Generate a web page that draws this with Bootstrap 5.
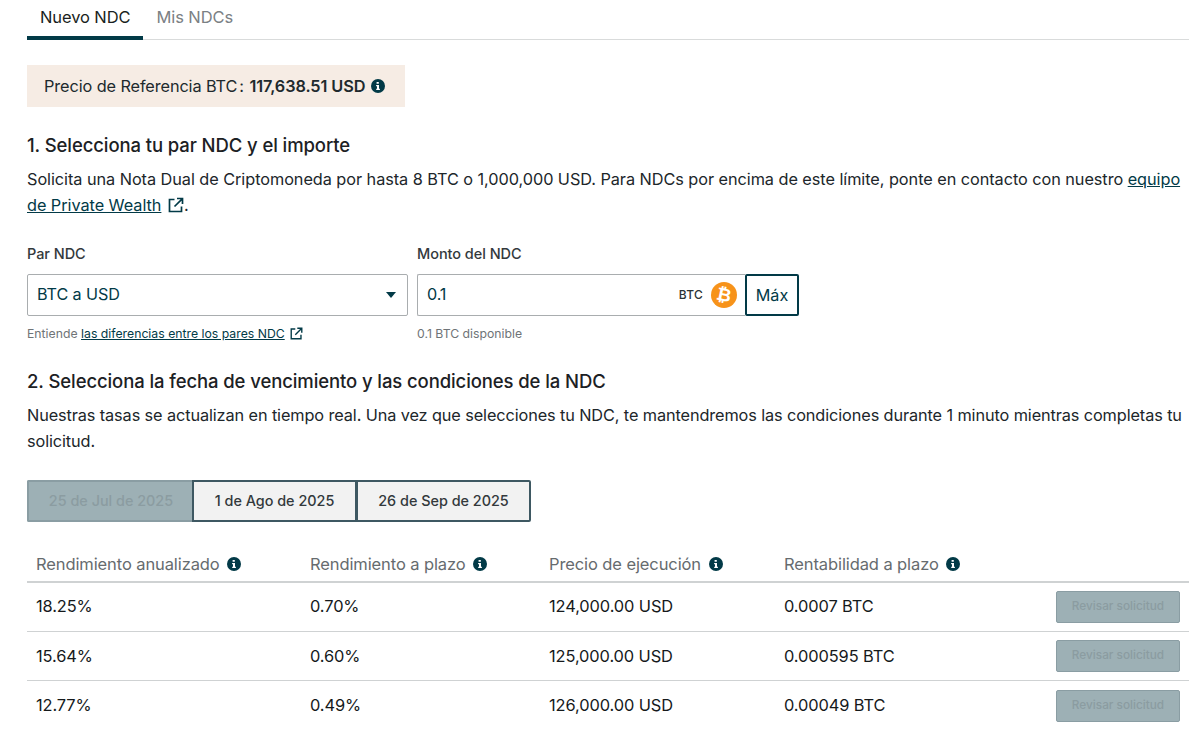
<!doctype html>
<html lang="es">
<head>
<meta charset="utf-8">
<title>Nueva NDC</title>
<link href="https://cdn.jsdelivr.net/npm/bootstrap@5.3.0/dist/css/bootstrap.min.css" rel="stylesheet">
<style>
html,body{background:#fff;overflow:hidden}
body{font-family:Inter,"Liberation Sans",sans-serif;color:#1a1f22;font-size:16.3px;letter-spacing:-.1px}
.pageshell{padding:0 11px 0 27px;height:738px}
.tabbar{height:40px;border-bottom:1px solid #d9dbdb;margin-bottom:25px}
.tabitem{display:block;height:40px;padding:6px 13px 0;font-size:16.5px;line-height:22px;color:#7b8084;text-decoration:none}
.tabitem.on{color:#1a1f22;border-bottom:4px solid #023a47;border-radius:4px 4px 0 0;margin-right:13px}
.refbox{background:#f6ece4;height:42px;width:378px;padding:0 17px;font-size:16.3px;color:#20292d;margin-bottom:25px}
.refbox .colon{margin-left:2px}
.refbox b{font-weight:600;margin-left:1px;letter-spacing:-.1px}
.infoico{width:14px;height:14px;flex:none}
.refbox .infoico{margin-left:6px}
.secttl{font-size:18.5px;font-weight:500;line-height:26px;margin:0 0 8px;color:#1c2124;letter-spacing:-.1px}
.bodytxt{font-size:16.28px;line-height:26px;margin:0;color:#20262a}
.bodytxt.firstpara{letter-spacing:-.05px}
.bodytxt a,.helptxt a{color:#023a47}
.extico{width:16px;height:16px;vertical-align:-2px;margin-left:2px}
.helptxt .extico{width:13px;height:13px;margin-left:2px}
.formzone{margin-top:26px;gap:9px;margin-bottom:26px}
.parcol{width:381px}
.lbl{font-size:14.5px;font-weight:500;line-height:20px;margin-bottom:10px;color:#33393c;letter-spacing:-.05px}
.fieldbox{height:42px;border:1px solid #a9adaf;border-radius:2px;padding:0 9px 1px;font-size:16.2px;color:#023a47;background:#fff}
.parcol .fieldbox{padding-right:11px}
.amtbox{width:328px;border-right:0;border-radius:2px 0 0 2px;padding-right:8px}
.unit{font-size:12px;font-weight:500;color:#2c3336;margin-right:8px;letter-spacing:.3px}
.maxbtn{width:54px;height:42px;border:2px solid #023a47;border-radius:2px;color:#023a47;background:#fff;font-size:16.2px;padding:0;font-weight:400}
.maxbtn:hover{color:#023a47;background:#fff;border-color:#023a47}
.helptxt{font-size:12.25px;line-height:16px;margin-top:10px;color:#6f7477;letter-spacing:0}
.dategrp{margin-top:26px;margin-bottom:30px}
.dategrp .btn{height:42px;padding:0;border:2px solid #3e5862;border-radius:0;background:#f2f2f2;color:#33393c;font-size:14.4px;font-weight:500;opacity:1}
.dategrp .btn + .btn{margin-left:-1px}
.dategrp .d1{width:166px;background:#9db0b5;color:#8b9ca1;border-color:#8a9da3;border-right:0;border-radius:2px 0 0 2px}
.dategrp .d2{width:165px}
.dategrp .d3{width:175px;border-radius:0 2px 2px 0}
.ratetbl{margin:0;table-layout:fixed;width:1162px;--bs-table-border-color:#cfd2d3}
.ratetbl th{font-weight:400;font-size:16.5px;color:#666b6e;padding:0 9px 4px;height:26px;vertical-align:middle;border-bottom-width:2px}
.ratetbl td{font-size:16.4px;color:#15191b;padding:0 9px;height:49.5px;vertical-align:middle;font-weight:400}
.ratetbl tr:last-child td{border-bottom:0}
.ratetbl th .infoico{margin-left:3px;vertical-align:-1px}
.c1{width:274px}.c2{width:239px}.c3{width:235px}.c4{width:240px}
.revbtn{width:124px;height:32px;padding:0;background:#9db0b5;border:1px solid #8a9da3;border-radius:2px;color:#8b9ca1;font-size:11.8px;font-weight:500;opacity:1}
.btn:disabled{background:#9db0b5;color:#8b9ca1;border-color:#8a9da3;opacity:1}
</style>
</head>
<body>
<svg width="0" height="0" class="position-absolute">
  <defs>
    <symbol id="info" viewBox="0 0 14 14"><circle cx="7" cy="7" r="7" fill="#023a47"/><path d="M5.6 3h2.2v1.8H5.6zM5.1 6h2.9v3.8h.9V11H5.2V9.8H6V7.2h-.9z" fill="#fff"/></symbol>
    <symbol id="ext" viewBox="0 0 16 16"><path d="M6.5 2.5H1.5v12h12V9.5M9 1.5h5.5V7M14.2 1.8 6.5 9.5" fill="none" stroke="#023a47" stroke-width="1.7"/></symbol>
  </defs>
</svg>
<main class="pageshell">
  <nav class="tabbar d-flex">
    <a class="tabitem on" href="#">Nuevo NDC</a>
    <a class="tabitem px-0" href="#">Mis NDCs</a>
  </nav>

  <div class="refbox d-flex align-items-center">
    <span>Precio de Referencia BTC<span class="colon">:</span> <b>117,638.51 USD</b></span>
    <svg class="infoico"><use href="#info"/></svg>
  </div>

  <h2 class="secttl">1. Selecciona tu par NDC y el importe</h2>
  <p class="bodytxt firstpara">Solicita una Nota Dual de Criptomoneda por hasta 8 BTC o 1,000,000 USD. Para NDCs por encima de este límite, ponte en contacto con nuestro <a href="#">equipo de Private Wealth</a> <svg class="extico"><use href="#ext"/></svg>.</p>

  <div class="formzone d-flex">
    <div class="parcol">
      <div class="lbl">Par NDC</div>
      <div class="fieldbox d-flex align-items-center justify-content-between">
        <span>BTC a USD</span>
        <svg width="10" height="6" viewBox="0 0 10 6"><path d="M0 0h10L5 6z" fill="#023a47"/></svg>
      </div>
      <div class="helptxt">Entiende <a href="#">las diferencias entre los pares NDC</a> <svg class="extico"><use href="#ext"/></svg></div>
    </div>
    <div>
      <div class="lbl">Monto del NDC</div>
      <div class="d-flex">
        <div class="fieldbox amtbox d-flex align-items-center">
          <span class="flex-grow-1">0.1</span>
          <span class="unit">BTC</span>
          <svg width="26" height="26" viewBox="0 0 26 26"><circle cx="13" cy="13" r="13" fill="#f7931a"/><text x="13" y="19" font-family="Liberation Sans,sans-serif" font-size="18" font-weight="700" fill="#fff" text-anchor="middle" transform="rotate(12 13 13)">₿</text></svg>
        </div>
        <button class="btn maxbtn" type="button">Máx</button>
      </div>
      <div class="helptxt">0.1 BTC disponible</div>
    </div>
  </div>

  <h2 class="secttl">2. Selecciona la fecha de vencimiento y las condiciones de la NDC</h2>
  <p class="bodytxt">Nuestras tasas se actualizan en tiempo real. Una vez que selecciones tu NDC, te mantendremos las condiciones durante 1 minuto mientras completas tu solicitud.</p>

  <div class="dategrp d-flex">
    <button class="btn d1" type="button" disabled>25 de Jul de 2025</button>
    <button class="btn d2" type="button">1 de Ago de 2025</button>
    <button class="btn d3" type="button">26 de Sep de 2025</button>
  </div>

  <table class="table ratetbl">
    <colgroup><col class="c1"><col class="c2"><col class="c3"><col class="c4"><col></colgroup>
    <thead>
      <tr>
        <th>Rendimiento anualizado <svg class="infoico"><use href="#info"/></svg></th>
        <th>Rendimiento a plazo <svg class="infoico"><use href="#info"/></svg></th>
        <th>Precio de ejecución <svg class="infoico"><use href="#info"/></svg></th>
        <th>Rentabilidad a plazo <svg class="infoico"><use href="#info"/></svg></th>
        <th></th>
      </tr>
    </thead>
    <tbody>
      <tr><td>18.25%</td><td>0.70%</td><td>124,000.00 USD</td><td>0.0007 BTC</td><td class="text-end"><button class="btn revbtn" disabled>Revisar solicitud</button></td></tr>
      <tr><td>15.64%</td><td>0.60%</td><td>125,000.00 USD</td><td>0.000595 BTC</td><td class="text-end"><button class="btn revbtn" disabled>Revisar solicitud</button></td></tr>
      <tr><td>12.77%</td><td>0.49%</td><td>126,000.00 USD</td><td>0.00049 BTC</td><td class="text-end"><button class="btn revbtn" disabled>Revisar solicitud</button></td></tr>
    </tbody>
  </table>
</main>
<script src="https://cdn.jsdelivr.net/npm/bootstrap@5.3.0/dist/js/bootstrap.bundle.min.js"></script>
</body>
</html>
